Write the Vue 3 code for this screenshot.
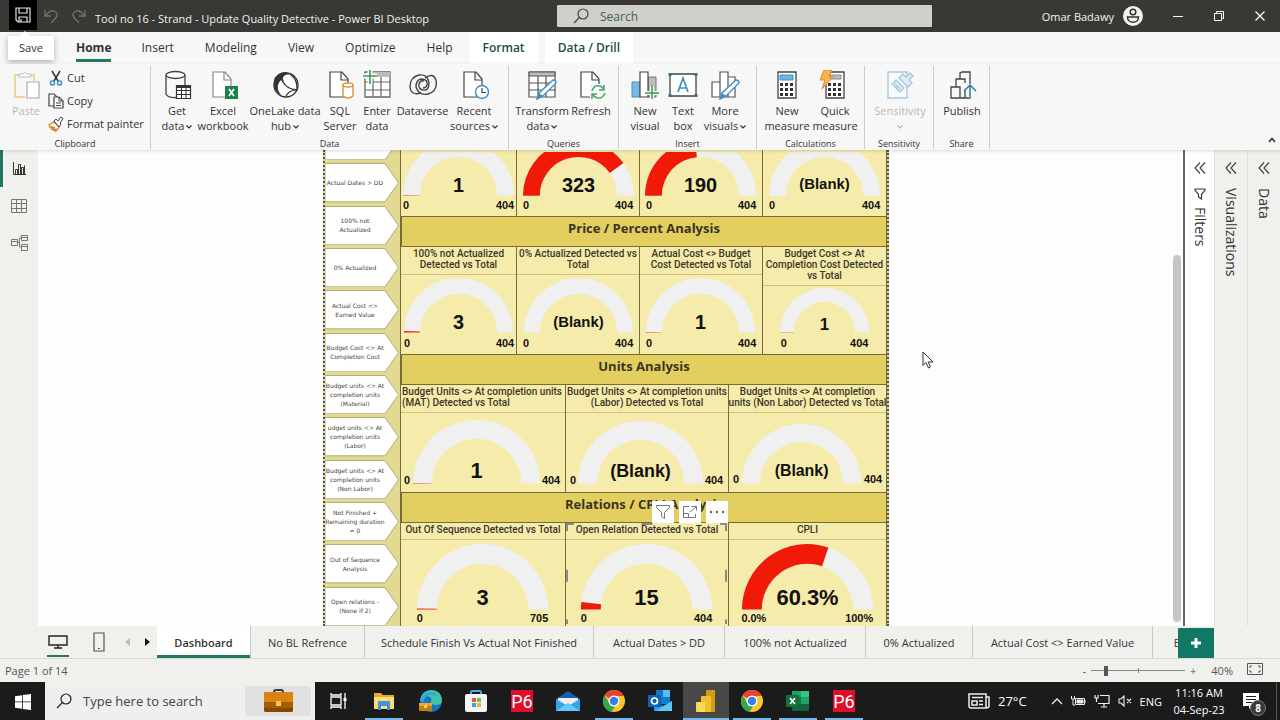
<template>
  <div class="app">
    <header class="titlebar">
      <div class="quick">
        <button class="save" aria-label="Save">
          <svg width="16" height="16" viewBox="0 0 16 16" fill="none" stroke="#e6e6e6" stroke-width="1.2"><path d="M1 1h14v14H3l-2-2zM4 1v5h8V1M4 15v-5h8v5M6 15v-3" /></svg>
        </button>
        <button aria-label="Undo">
          <svg width="14" height="15" viewBox="0 0 14 15" fill="none" stroke="#73736f" stroke-width="1.3"><path d="M1 1v6h6M1 7l4-4c4-3 8 0 8 3 0 2-1 3-6 8" /></svg>
        </button>
        <button aria-label="Redo">
          <svg width="14" height="15" viewBox="0 0 14 15" fill="none" stroke="#73736f" stroke-width="1.3"><path d="M13 1v6H7M13 7L9 3C5 0 1 3 1 6c0 2 1 3 6 8" /></svg>
        </button>
      </div>
      <h1>Tool no 16 - Strand - Update Quality Detective - Power BI Desktop</h1>
      <label class="find">
        <svg width="16" height="16" viewBox="0 0 16 16" fill="none" stroke="#444" stroke-width="1.2"><circle cx="10" cy="6" r="5" /><path d="M6.400 9.500L1 15" /></svg>
        <input type="text" placeholder="Search" aria-label="Search">
      </label>
      <div class="account">
        <span>Omar Badawy</span>
        <svg width="20" height="20" viewBox="0 0 20 20"><circle cx="10" cy="10" r="10" fill="#f2f2f0" /><g fill="none" stroke="#30302e" stroke-width="1.500"><circle cx="10" cy="6" r="2.800" /><path d="M4.500 11h11c0 7-11 7-11 0z" /></g></svg>
      </div>
      <div class="window-buttons">
        <button aria-label="Minimize"><svg width="10" height="10" viewBox="0 0 10 10" stroke="#fff"><path d="M0 5.500h10" /></svg></button>
        <button aria-label="Restore"><svg width="10" height="10" viewBox="0 0 10 10" fill="none" stroke="#fff"><path d="M.5 2.500h7v7h-7zM2.500 2.500v-2h7v7h-2" /></svg></button>
        <button aria-label="Close"><svg width="10" height="10" viewBox="0 0 10 10" stroke="#fff" stroke-width="1.200"><path d="M.5.5l9 9M9.500.5l-9 9" /></svg></button>
      </div>
    </header>

    <nav class="menu">
      <button v-for="m in menu" :key="m.name" :class="m.kind">{{ m.name }}</button>
      <div class="tooltip">Save</div>
    </nav>

    <section class="ribbon">
      <div class="group clipboard">
        <div class="tools">
          <button class="tool off">
            <svg class="icon" viewBox="0 0 30 30" v-html="icons.paste"></svg>
            <span>Paste</span>
          </button>
          <div class="stack">
            <button v-for="c in clip" :key="c.name">
              <svg width="16" height="16" viewBox="0 0 16 16" v-html="icons[c.icon]"></svg>{{ c.name }}
            </button>
          </div>
        </div>
        <div class="caption">Clipboard</div>
      </div>
      <div v-for="g in groups" :key="g.name" class="group" :style="{ width: g.w + 'px' }">
        <div class="tools">
          <button v-for="t in g.tools" :key="t.a + t.icon" class="tool" :class="{ off: t.off }" :style="{ width: t.w + 'px' }">
            <svg class="icon" viewBox="0 0 30 30" v-html="icons[t.icon]"></svg>
            <span>{{ t.a }}</span>
            <span>{{ t.b }}<svg v-if="t.drop" class="drop" width="6" height="4" viewBox="0 0 6 4" fill="none" stroke="currentColor" stroke-width="1.200"><path d="M.5.5L3 3 5.500.5" /></svg></span>
          </button>
        </div>
        <div class="caption">{{ g.name }}</div>
      </div>
      <button class="collapse" aria-label="Collapse ribbon"><svg width="8" height="6" viewBox="0 0 8 6" fill="none" stroke="#333" stroke-width="1.600"><path d="M1 5l3-3.500L7 5" /></svg></button>
    </section>

    <main class="work">
      <aside class="views">
        <button class="on" aria-label="Report view"><svg width="14" height="14" viewBox="0 0 14 14" fill="none" stroke="#333"><path d="M1.500 0v12.500H14M3.500 12V7.500h2V12M6.500 12V2.500h2V12M9.500 12V5.500h2V12M12.500 12V3.500" /></svg></button>
        <button aria-label="Table view"><svg width="16" height="14" viewBox="0 0 16 14" fill="none" stroke="#777"><path d="M.5.5h15v13H.5zM.5 4.500h15M.5 9.500h15M5.500.5v13M10.500.5v13" /></svg></button>
        <button aria-label="Model view"><svg width="17" height="16" viewBox="0 0 17 16" fill="none" stroke="#777"><path d="M.5 4.500h6v6h-6zM.5 6.500h6M10.500.5h6v5h-6zM10.500 2.500h6M10.500 9.500h6v6h-6zM10.500 11.500h6M6.500 7.500h2V3h2M8.500 7.500V12h2" /></svg></button>
      </aside>

      <div class="canvas">
        <div class="report">
          <nav class="pages">
            <a v-for="(p, i) in links" :key="i" href="#">
              <svg viewBox="0 0 74 39" preserveAspectRatio="none"><path d="M0 .5h60L73.500 19.500 60 38.500H0z" fill="#fff" stroke="#a39b62" stroke-width=".8" /></svg>
              <span>{{ p }}</span>
            </a>
          </nav>
          <div class="board">
            <template v-for="(r, i) in rows" :key="i">
              <h2 v-if="r.head">{{ r.head }}</h2>
              <div class="cards" :class="r.kind">
                <article v-for="(c, j) in r.cards" :key="j" :class="{ picked: c.picked }">
                  <h3 v-if="c.title" :class="{ left: c.left }"><span v-for="t in c.title" :key="t">{{ t }}</span></h3>
                  <svg class="gauge" :viewBox="`0 0 ${c.w} ${c.h}`">
                    <path :d="arc(c, 0, 1)" fill="#f0f0f0" />
                    <path v-if="c.part" :d="arc(c, 0, c.part)" fill="#f11a08" />
                    <text :x="c.x" :y="c.y - c.up" :font-size="c.size">{{ c.val }}</text>
                    <text :x="c.lx" :y="c.ly" font-size="11">{{ c.min || '0' }}</text>
                    <text :x="c.rx" :y="c.ly" font-size="11">{{ c.max || '404' }}</text>
                  </svg>
                  <template v-if="c.picked">
                    <svg class="handles" viewBox="0 0 163 102" fill="none" stroke="#8b8b86" stroke-width="2"><path d="M1 8V1h7M76 1h11M155 1h6v7M1 47v12M161 47v12M1 97v5M161 97v5" /></svg>
                    <div class="visual-tools">
                      <button aria-label="Filters"><svg width="16" height="16" viewBox="0 0 16 16" fill="none" stroke="#777"><path d="M1.500 1.500h13v2l-5 5v6l-3-2v-4l-5-5z" /></svg></button>
                      <button aria-label="Focus mode"><svg width="16" height="14" viewBox="0 0 16 14" fill="none" stroke="#777"><path d="M7 1.500H1.500v11h12V9M9.500 1.500h5v4M14.500 1.500L8 7M1.500 8.500h5v4" /></svg></button>
                      <button aria-label="More options"><svg width="16" height="4" viewBox="0 0 16 4" fill="#666"><circle cx="2" cy="2" r="1.200" /><circle cx="8" cy="2" r="1.200" /><circle cx="14" cy="2" r="1.200" /></svg></button>
                    </div>
                  </template>
                </article>
              </div>
            </template>
          </div>
        </div>
        <div class="scroll"></div>
        <svg class="pointer" width="12" height="18" viewBox="0 0 12 18"><path d="M1 1v13.500l3-3 2.500 5.500 2-1-2.300-5H11z" fill="#fff" stroke="#333" /></svg>
      </div>

      <aside v-for="p in panes" :key="p" class="pane" :class="p.toLowerCase()">
        <button :aria-label="'Expand ' + p"><svg width="12" height="12" viewBox="0 0 12 12" fill="none" stroke="#444" stroke-width="1.200"><path d="M6 .5L1 6l5 5.500M11 .5L6 6l5 5.500" /></svg></button>
        <svg v-if="p === 'Filters'" width="12" height="12" viewBox="0 0 12 12" fill="none" stroke="#333" stroke-width="1.200"><path d="M1 1h10v1L7.500 6.500V11l-3-2V6.500L1 2z" /></svg>
        <span>{{ p }}</span>
      </aside>
    </main>

    <footer class="sheets">
      <div class="modes">
        <button class="on" aria-label="Desktop layout"><svg width="20" height="14" viewBox="0 0 20 14" fill="none" stroke="#222" stroke-width="1.400"><path d="M1 1h18v9H1zM10 10v3M6 13h8" /></svg></button>
        <button aria-label="Mobile layout"><svg width="12" height="20" viewBox="0 0 12 20" fill="none" stroke="#555" stroke-width="1.200"><path d="M1 1h10v18H1zM5 16.500h2" /></svg></button>
        <button class="step" aria-label="Previous page"><svg width="5" height="8" viewBox="0 0 5 8" fill="#bbb"><path d="M5 0v8L0 4z" /></svg></button>
        <button class="step" aria-label="Next page"><svg width="5" height="8" viewBox="0 0 5 8" fill="#111"><path d="M0 0v8l5-4z" /></svg></button>
      </div>
      <div class="tabs">
        <button v-for="(s, i) in sheets" :key="s.name" :class="{ on: i === 0 }" :style="{ width: s.w + 'px' }">{{ s.name }}</button>
      </div>
      <button class="add" aria-label="New page"><svg width="12" height="12" viewBox="0 0 12 12" stroke="#fff" stroke-width="3"><path d="M6 1v10M1 6h10" /></svg></button>
    </footer>

    <div class="status">
      <span>Page 1 of 14</span>
      <div class="zoom">
        <button aria-label="Zoom out">-</button>
        <input v-model="zoom" type="range" min="10" max="122" aria-label="Zoom">
        <button aria-label="Zoom in">+</button>
        <span class="pct">40%</span>
        <button aria-label="Fit to page"><svg width="16" height="12" viewBox="0 0 16 12" fill="none" stroke="#555"><path d="M.5.5h15v11H.5zM3 5V3h2M11 3h2v2M13 7v2h-2M5 9H3V7" /></svg></button>
      </div>
    </div>

    <div class="taskbar">
      <button class="start" aria-label="Start"><svg width="16" height="16" viewBox="0 0 16 16" fill="#fff"><path d="M0 2.200L7 1.200v6.300H0zM7.800 1.100L16 0v7.500H7.800zM0 8.300h7v6.500l-7-1zM7.800 8.300H16V16l-8.200-1.100z" /></svg></button>
      <label class="seek">
        <svg width="16" height="16" viewBox="0 0 16 16" fill="none" stroke="#222" stroke-width="1.200"><circle cx="10" cy="6" r="5" /><path d="M6.400 9.500L1 15" /></svg>
        <input type="text" placeholder="Type here to search" aria-label="Type here to search">
        <span class="case"><svg width="29" height="24" viewBox="0 0 29 24"><path d="M10 4V3q0-2 2-2h5q2 0 2 2v1" fill="none" stroke="#3b3b3b" stroke-width="2" /><rect y="3" width="29" height="20" rx="2" fill="#a65c05" /><path d="M0 13V5q0-2 2-2h25q2 0 2 2v8z" fill="#d98310" /><path d="M0 19h29v2q0 2-2 2H2q-2 0-2-2z" fill="#844606" /><rect x="12" y="12" width="5" height="5" fill="#ffcc3e" /></svg></span>
      </label>
      <button v-for="(a, i) in apps" :key="i" class="app-button" :class="{ open: a.open, front: a.front }" :aria-label="a.name">
        <svg width="24" height="24" viewBox="0 0 24 24" v-html="icons[a.icon]"></svg>
        <span v-if="a.icon === 'p6'" class="p6">P6</span>
      </button>
      <div class="tray">
        <svg class="news" width="22" height="16" viewBox="0 0 22 16" fill="none" stroke="#eee" stroke-width="1.500"><path d="M1 1h17v14H3q-2 0-2-2zM18 4h3v9q0 2-3 2M4 4.500h11M4 8h5v4H4zM11 8h4M11 11.500h4" /></svg>
        <span class="temp">27°C</span>
        <svg class="up" width="12" height="7" viewBox="0 0 12 7" fill="none" stroke="#eee" stroke-width="1.300"><path d="M1 6l5-5 5 5" /></svg>
        <svg width="15" height="12" viewBox="0 0 15 12" fill="none" stroke="#eee"><path d="M4.500 3.500h9v6h-9zM14 5v3" /><path d="M6 5h6v3H6z" fill="#eee" /><path d="M.5 1v3h3V1M2 4v6h2" /></svg>
        <svg width="16" height="14" viewBox="0 0 16 14" fill="none" stroke="#eee" stroke-width="1.200"><path d="M6 1.500h9v8H4M10 10v3M7 13h6M1 1v3h3V1M2.500 4v4" /></svg>
        <svg width="14" height="12" viewBox="0 0 14 12" fill="none" stroke="#eee" stroke-width="1.100"><path d="M1 4h2l3-3v10L3 8H1zM9 4l4 4M13 4L9 8" /></svg>
        <span class="lang">ENG</span>
        <div class="clock"><span>11:16 AM</span><span>04-Sep-23</span></div>
        <div class="notice">
          <svg width="16" height="16" viewBox="0 0 16 16" fill="#fff"><path d="M0 0h16v13H9l-3 3v-3H0z" /><path d="M3 3.500h10M3 6.500h10M3 9.500h6" stroke="#1b1b1b" /></svg>
          <b>8</b>
        </div>
      </div>
    </div>
  </div>
</template>

<script setup>
import { ref } from 'vue'

const zoom = ref(26)
const panes = ['Filters', 'Visualizations', 'Data']

const menu = [
  { name: 'Home', kind: 'on' },
  { name: 'Insert' },
  { name: 'Modeling' },
  { name: 'View' },
  { name: 'Optimize' },
  { name: 'Help' },
  { name: 'Format', kind: 'extra' },
  { name: 'Data / Drill', kind: 'extra' }
]

const clip = [
  { name: 'Cut', icon: 'cut' },
  { name: 'Copy', icon: 'copy' },
  { name: 'Format painter', icon: 'brush' }
]

const groups = [
  { name: 'Data', w: 358, tools: [
    { a: 'Get', b: 'data', drop: true, icon: 'getdata', w: 42 },
    { a: 'Excel', b: 'workbook', icon: 'excelbook', w: 50 },
    { a: 'OneLake data', b: 'hub', drop: true, icon: 'onelake', w: 74 },
    { a: 'SQL', b: 'Server', icon: 'sql', w: 36 },
    { a: 'Enter', b: 'data', icon: 'enter', w: 38 },
    { a: 'Dataverse', b: '', icon: 'dataverse', w: 53 },
    { a: 'Recent', b: 'sources', drop: true, icon: 'recent', w: 50 }
  ] },
  { name: 'Queries', w: 110, tools: [
    { a: 'Transform', b: 'data', drop: true, icon: 'transform', w: 56 },
    { a: 'Refresh', b: '', icon: 'refresh', w: 42 }
  ] },
  { name: 'Insert', w: 138, tools: [
    { a: 'New', b: 'visual', icon: 'visual', w: 42 },
    { a: 'Text', b: 'box', icon: 'textbox', w: 34 },
    { a: 'More', b: 'visuals', drop: true, icon: 'more', w: 50 }
  ] },
  { name: 'Calculations', w: 108, tools: [
    { a: 'New', b: 'measure', icon: 'measure', w: 50 },
    { a: 'Quick', b: 'measure', icon: 'quick', w: 46 }
  ] },
  { name: 'Sensitivity', w: 69, tools: [{ a: 'Sensitivity', b: '', drop: true, off: true, icon: 'label', w: 60 }] },
  { name: 'Share', w: 56, tools: [{ a: 'Publish', b: '', icon: 'publish', w: 46 }] }
]

const links = [
  '', 'Actual Dates > DD', '100% not Actualized', '0% Actualized', 'Actual Cost <> Earned Value',
  'Budget Cost <> At Completion Cost', 'Budget units <> At completion units (Material)',
  'udget units <> At completion units (Labor)', 'Budget units <> At completion units (Non Labor)',
  'Not Finished + Remaining duration = 0', 'Out of Sequence Analysis', 'Open relations - (None if 2)'
]

const rows = [
  { kind: 'four top', cards: [
    { w: 116, h: 65, x: 58, y: 44, r: 56, k: 39, part: 0.003, val: '1', size: 20, up: 4, lx: 5, rx: 105, ly: 57 },
    { w: 123, h: 65, x: 62, y: 44, r: 56, k: 39, part: 0.8, val: '323', size: 20, up: 4, lx: 9, rx: 108, ly: 57 },
    { w: 123, h: 65, x: 61, y: 44, r: 56, k: 39, part: 0.47, val: '190', size: 20, up: 4, lx: 9, rx: 108, ly: 57 },
    { w: 124, h: 65, x: 62, y: 44, r: 56, k: 39, val: '(Blank)', size: 15, up: 7, lx: 9, rx: 109, ly: 57 }
  ] },
  { kind: 'four', head: 'Price / Percent Analysis', cards: [
    { title: ['100% not Actualized', 'Detected vs Total'], w: 116, h: 78, x: 58, y: 58, r: 55, k: 39, part: 0.008, val: '3', size: 20, up: 4, lx: 6, rx: 105, ly: 73 },
    { title: ['0% Actualized Detected vs', 'Total'], w: 123, h: 78, x: 62, y: 58, r: 55, k: 39, val: '(Blank)', size: 15, up: 6, lx: 9, rx: 108, ly: 73 },
    { title: ['Actual Cost <> Budget', 'Cost Detected vs Total'], w: 123, h: 78, x: 61, y: 58, r: 55, k: 39, part: 0.003, val: '1', size: 20, up: 4, lx: 9, rx: 108, ly: 73 },
    { title: ['Budget Cost <> At', 'Completion Cost Detected', 'vs Total'], w: 124, h: 67, x: 62, y: 47, r: 45, k: 31, part: 0.003, val: '1', size: 17, up: 3, lx: 21, rx: 97, ly: 62 }
  ] },
  { kind: 'three', head: 'Units Analysis', cards: [
    { title: ['Budget Units <> At completion units', '(MAT) Detected vs Total'], left: true, w: 165, h: 79, x: 76, y: 71, r: 64, k: 45, part: 0.003, val: '1', size: 22, up: 6, lx: 6, rx: 151, ly: 71 },
    { title: ['Budget Units <> At completion units', '(Labor) Detected vs Total'], w: 163, h: 79, x: 75, y: 71, r: 63, k: 44, val: '(Blank)', size: 18, up: 7, lx: 7, rx: 149, ly: 71 },
    { title: ['Budget Units <> At completion', 'units (Non Labor) Detected vs Total'], w: 158, h: 79, x: 73, y: 71, r: 60, k: 42, val: '(Blank)', size: 16, up: 8, lx: 7, rx: 145, ly: 70 }
  ] },
  { kind: 'three', head: 'Relations / CPLI Analysis', cards: [
    { title: ['Out Of Sequence Detected vs Total'], w: 165, h: 86, x: 82, y: 70, r: 66, k: 46, part: 0.005, val: '3', size: 22, up: 5, lx: 19, rx: 139, ly: 83, max: '705' },
    { title: ['Open Relation Detected vs Total'], picked: true, w: 163, h: 86, x: 81, y: 70, r: 66, k: 46, part: 0.037, val: '15', size: 22, up: 5, lx: 18, rx: 138, ly: 83 },
    { title: ['CPLI'], w: 158, h: 86, x: 79, y: 70, r: 66, k: 46, part: 0.603, val: '60.3%', size: 22, up: 5, lx: 25, rx: 131, ly: 83, min: '0.0%', max: '100%' }
  ] }
]

function arc(c, from, to) {
  const pt = (rad, t) => {
    const a = Math.PI * (1 - t)
    return (c.x + rad * Math.cos(a)).toFixed(2) + ' ' + (c.y - rad * Math.sin(a)).toFixed(2)
  }
  return `M${pt(c.r, from)}A${c.r} ${c.r} 0 0 1 ${pt(c.r, to)}L${pt(c.k, to)}A${c.k} ${c.k} 0 0 0 ${pt(c.k, from)}z`
}

const sheets = [
  { name: 'Dashboard', w: 94 },
  { name: 'No BL Refrence', w: 114 },
  { name: 'Schedule Finish Vs Actual Not Finished', w: 229 },
  { name: 'Actual Dates > DD', w: 131 },
  { name: '100% not Actualized', w: 141 },
  { name: '0% Actualized', w: 107 },
  { name: 'Actual Cost <> Earned Value', w: 180 },
  { name: 'Budget Cost <> At Completion Cost', w: 222 }
]

const apps = [
  { name: 'Task view', icon: 'taskview' },
  { name: 'File Explorer', icon: 'folder', open: true },
  { name: 'Edge', icon: 'edge' },
  { name: 'Store', icon: 'store' },
  { name: 'Primavera', icon: 'p6' },
  { name: 'Mail', icon: 'mail' },
  { name: 'Chrome', icon: 'chrome', open: true },
  { name: 'Outlook', icon: 'outlook' },
  { name: 'Power BI', icon: 'powerbi', front: true, open: true },
  { name: 'Chrome', icon: 'chrome', open: true },
  { name: 'Excel', icon: 'excel', open: true },
  { name: 'Primavera', icon: 'p6', open: true }
]

const sheet = '<path d="M5 2h12l6 7v18H5z" fill="#fff" stroke="#444" stroke-width="1.200"/><path d="M16 2v8h7" fill="none" stroke="#444" stroke-width="1.200"/>'
const pencil = '<path d="M26 10q3 0 3 3L16 26l-6 3 2-6z" fill="#fff" stroke="#3f8fc4" stroke-width="1.400"/><path d="M12 23l4 3-6 3z" fill="#3f8fc4"/>'
const dots = '<path d="M8 13h3v3H8zM13 13h3v3h-3zM18 13h3v3h-3zM8 18h3v3H8zM13 18h3v3h-3zM18 18h3v3h-3zM8 23h3v3H8zM13 23h3v3h-3zM18 23h3v3h-3z" fill="#333"/>'

const icons = {
  paste: '<path d="M9 5H4v22h10M19 5h4v6" fill="none" stroke="#efd3a0" stroke-width="2"/><path d="M8 7V4h4q1-3 4 0h4v3z" fill="#fff" stroke="#bbb"/><path d="M16 12h12v16H16z" fill="#fff" stroke="#aaa" stroke-width="1.200"/>',
  cut: '<path d="M4 1l6 10M12 1L6 11" fill="none" stroke="#333" stroke-width="1.500"/><circle cx="4.500" cy="13" r="2" fill="none" stroke="#3f8fc4" stroke-width="1.500"/><circle cx="11.500" cy="13" r="2" fill="none" stroke="#3f8fc4" stroke-width="1.500"/>',
  copy: '<path d="M6 13H1V1h5l3 3" fill="none" stroke="#444" stroke-width="1.200"/><path d="M6 4h5l4 4v7H6z" fill="#fff" stroke="#444" stroke-width="1.200"/><path d="M11 4v4h4M8 10h5M8 12.500h5" fill="none" stroke="#444"/>',
  brush: '<path d="M1 9l5-3 5 5-3 4q-5-1-7-6z" fill="#fff" stroke="#d8822c" stroke-width="1.400"/><path d="M3 11l4 1M5 13l3 1" stroke="#d8822c" stroke-width="2"/><path d="M6 5l2-2 2 2 3-4 2 1.500L12 7l1 1-2 3z" fill="#fff" stroke="#444"/>',
  getdata: '<path d="M4 5v19q2 4 10 3.500M23 5v10" fill="none" stroke="#444" stroke-width="1.300"/><ellipse cx="13.500" cy="5" rx="9.500" ry="3.500" fill="#fff" stroke="#444" stroke-width="1.300"/><path d="M14.500 15.500h14v13h-14z" fill="#fff" stroke="#333" stroke-width="1.200"/><path d="M14 17h15" stroke="#333" stroke-width="2"/><path d="M14 20.500h15M14 24.500h15M19.500 17v11M24 17v11" stroke="#333"/>',
  excelbook: sheet.replace(/#444/g, '#888') + '<path d="M17 16h13v13H17z" fill="#17834a"/><path d="M21 19l5 7M26 19l-5 7" stroke="#fff" stroke-width="1.700"/>',
  onelake: '<circle cx="16" cy="15" r="12" fill="#fff" stroke="#333" stroke-width="1.300"/><path d="M16 2Q7 2 4 10q-2 10 8 16-8-9-1-16 4 8 16 10 2-12-11-18z" fill="#333"/><path d="M12 8q2 11 15 12 1-10-7-16-6-1-8 4z" fill="#fff" stroke="#333" stroke-width="1.200"/><path d="M27 20q-8 0-11 6" fill="none" stroke="#333" stroke-width="1.200"/>',
  sql: sheet + '<path d="M18 15v11q5 4 10 0V15" fill="#fff" stroke="#e0913c" stroke-width="1.400"/><ellipse cx="23" cy="15" rx="5" ry="2" fill="#fff" stroke="#e0913c" stroke-width="1.400"/>',
  enter: '<path d="M3 2h25v25H3z" fill="#fff" stroke="#666" stroke-width="1.300"/><path d="M10 2h18v5H10z" fill="#bbb"/><path d="M3 12h25M3 20h25M11 7v20M19 7v20" stroke="#666" stroke-width="1.200"/><path d="M8 0v14M0 6h15" stroke="#f7f7f7" stroke-width="5"/><path d="M8 0v14M1 6h14" stroke="#3b9b5b" stroke-width="1.600"/>',
  dataverse: '<g fill="none" stroke="#444" stroke-width="1.400"><path d="M13 23q-10 3-11-6Q2 7 11 5q9-1 10 8 0 8-6 7-5-1-4-6 1-4 5-3"/><path d="M17 8q8-6 11 2 2 11-8 14-9 2-12-7 0-7 5-8 7 0 6 6-1 3-4 3"/></g>',
  recent: sheet + '<circle cx="23" cy="22" r="6.500" fill="#fff" stroke="#3f8fc4" stroke-width="1.400"/><path d="M23 18v4.500h4" fill="none" stroke="#444" stroke-width="1.200"/>',
  transform: '<path d="M2 2h26v25H2z" fill="#fff" stroke="#555" stroke-width="1.200"/><path d="M2 2h26v4H2z" fill="#bbb" stroke="#555"/><path d="M2 13h26M2 20h26M11 6v21M19 6v21" stroke="#555" stroke-width="1.200"/>' + pencil,
  refresh: sheet + '<path d="M14 14h16v16H14z" fill="#f7f7f7"/><path d="M16 21q2-6 7-5 3 0 5 4M28 15v5h-5M29 23q-2 5-6 5-4 0-7-4M16 29v-5h5" fill="none" stroke="#4aa565" stroke-width="1.500"/>',
  visual: '<path d="M2 12h8v15H2z" fill="#7ab8e4" stroke="#3f8fc4"/><path d="M18 7h8v20h-8z" fill="#bbb" stroke="#777"/><path d="M10 2h8v25h-8z" fill="#fff" stroke="#444" stroke-width="1.200"/><path d="M22 16v13M15 23h14" stroke="#f7f7f7" stroke-width="4"/><path d="M22 15v14M15 23h14" stroke="#3b9b5b" stroke-width="1.500"/>',
  textbox: '<path d="M2 4h26v22H2z" fill="#fff" stroke="#444" stroke-width="1.300"/><path d="M10 22l5-14 5 14M12 18h7" fill="none" stroke="#3f8fc4" stroke-width="1.700"/><path d="M.5 3h3v3h-3zM26.500 3h3v3h-3zM.5 24h3v3h-3zM26.500 24h3v3h-3z" fill="#32708f"/>',
  more: '<path d="M2 12h8v15H2zM10 2h8v25h-8zM18 7h7v20h-7z" fill="#fff" stroke="#555" stroke-width="1.200"/>' + pencil,
  measure: '<path d="M6 2h18v26H6z" fill="#fff" stroke="#444" stroke-width="1.300"/><path d="M8 5h13v5H8z" fill="#6db4e3" stroke="#3f8fc4"/>' + dots,
  quick: '<path d="M6 2h18v26H6z" fill="#fff" stroke="#444" stroke-width="1.300"/><path d="M10 5h11v4H10z" fill="#bbb" stroke="#888"/>' + dots + '<path d="M4 0h8L9 7h4L2 19l3-9H0z" fill="#f5b34f" stroke="#dc8b2e"/>',
  label: '<path d="M3 2h19v26H3z" fill="#f7fbfd" stroke="#a8c9dc" stroke-width="1.400"/><path d="M7 14l4-4 8 8-4 4zM10 14l5 5M14 8l4-4 3 3 4-4 3 3-4 4 3 3-4 4z" fill="#dcecf5" stroke="#a8c9dc" stroke-width="1.400"/>',
  publish: '<path d="M4 28V17h9v11zM9 17V9h9v4M13 9V3l2-1h8v12M13 28h9M18 20v8" fill="none" stroke="#444" stroke-width="1.300"/><path d="M23 29V16M17 21l6-6 6 6" fill="none" stroke="#2f7e9e" stroke-width="1.500"/>',
  taskview: '<path d="M5 8h10v8H5zM5 4v2h10V4M5 20v-2h10v2M19 4v16" fill="none" stroke="#fff" stroke-width="1.300"/><path d="M17.500 9h3v3h-3z" fill="#fff"/>',
  folder: '<path d="M2 4h7l2 2h11v14H2z" fill="#e8a931"/><path d="M2 8h20v12H2z" fill="#fddc78"/><path d="M6 12h12v9h-3v-4H9v4H6z" fill="#3f95d3"/>',
  edge: '<circle cx="13" cy="12" r="11" fill="#1674c4"/><path d="M2 11Q4 1 14 1q9 1 10 9 0 6-6 6-5 0-5-3 2-6-5-6-4 0-6 4z" fill="#43c5a1"/><path d="M2 11Q5 3 14 3q6 1 6 6-2-3-7-3-6 0-8 8z" fill="#30a7de"/><path d="M1 14h13v8H1z" fill="#c47c14"/><path d="M1 14h13v3H1z" fill="#efa52b"/><path d="M6 16h3v3H6z" fill="#ffd767"/>',
  store: '<path d="M7 6V3q0-1 2-1h6q2 0 2 1v3" fill="none" stroke="#4fb2e6" stroke-width="1.800"/><rect x="1" y="5" width="22" height="18" rx="2" fill="#f5f5f5"/><path d="M8 9h4v4H8z" fill="#e1583b"/><path d="M13 9h4v4h-4z" fill="#7db843"/><path d="M8 14h4v4H8z" fill="#3b9de0"/><path d="M13 14h4v4h-4z" fill="#f0b432"/>',
  p6: '<path d="M1 1h22v22H1z" fill="#e00d2b"/>',
  mail: '<path d="M0 10l12-8 12 8v12H0z" fill="#135ea8"/><path d="M2 9h20v7H2z" fill="#eee"/><path d="M0 10l12 7 12-7v12H0z" fill="#30a5e8"/><path d="M0 22l12-8 12 8z" fill="#63c9f5"/>',
  chrome: '<circle cx="12" cy="12" r="11" fill="#fbc52c"/><path d="M12 12L2.500 6.500Q6 1 12 1q7 0 10 6H12z" fill="#e64335"/><path d="M2.500 6.500L8 15l5 2-3.500 6Q1 21 1 12q0-3 1.500-5.500z" fill="#34a551"/><circle cx="12" cy="12" r="5.500" fill="#fff"/><circle cx="12" cy="12" r="4.200" fill="#3b7ded"/>',
  outlook: '<path d="M8 1h14v14H8z" fill="#1578cd"/><path d="M15 1h7v7h-7z" fill="#4fc1f2"/><path d="M6 12l9 5 9-5v10H6z" fill="#2a9be4"/><path d="M24 12v10H8z" fill="#5bc5f3"/><path d="M0 6h13v12H0z" fill="#0c62b4"/><circle cx="6.500" cy="12" r="3" fill="none" stroke="#fff" stroke-width="1.700"/>',
  powerbi: '<rect x="12" y="1" width="9" height="22" rx="1" fill="#d99a12"/><rect x="7" y="7" width="10" height="16" rx="1" fill="#f0bf2c"/><rect x="2" y="13" width="9" height="10" rx="1" fill="#f8d95c"/>',
  excel: '<path d="M6 2h17v20H6z" fill="#21a366"/><path d="M15 2h8v6h-8z" fill="#38c481"/><path d="M6 8h9v7H6z" fill="#107c41"/><path d="M6 15h17v7H6z" fill="#17613b"/><path d="M0 6h13v12H0z" fill="#0f7039"/><path d="M4 9l5 6M9 9l-5 6" stroke="#fff" stroke-width="1.700"/>'
}
</script>

<style>
body {
  margin: 0;
}
</style>

<style scoped>
.app {
  height: 100vh;
  display: flex;
  flex-direction: column;
  overflow: hidden;
  font-family: "Open Sans", "Noto Sans", sans-serif;
  font-size: 11px;
  color: #333;
  background: #f0f0ec;
}

button {
  border: 0;
  padding: 0;
  background: none;
  font: inherit;
  color: inherit;
  white-space: nowrap;
}

input {
  border: 0;
  padding: 0;
  min-width: 0;
  background: none;
  font: inherit;
}

svg {
  flex: none;
}

/* title bar */
.titlebar {
  height: 32px;
  flex: none;
  display: flex;
  align-items: center;
  position: relative;
  background: #383834;
  color: #f2f2f2;
}

.quick {
  display: flex;
  align-self: stretch;
  align-items: center;
  padding-left: 9px;
}

.quick button {
  width: 28px;
  height: 30px;
  display: grid;
  place-items: center;
}

.quick .save {
  background: #000;
  align-self: flex-start;
}

h1 {
  margin: 5px 0 0 2px;
  font-size: 11px;
  font-weight: 400;
  white-space: nowrap;
  flex: 1;
}

.find {
  position: absolute;
  left: 557px;
  right: 348px;
  top: 5px;
  height: 22px;
  display: flex;
  align-items: center;
  gap: 11px;
  padding-left: 16px;
  box-sizing: border-box;
  background: #cfd0ca;
  border-radius: 1px;
}

.find input {
  flex: 1;
  font-size: 12px;
}

.find input::placeholder {
  color: #3d6159;
}

.account {
  display: flex;
  align-items: center;
  gap: 9px;
}

.window-buttons {
  display: flex;
  padding-left: 14px;
}

.window-buttons button {
  width: 41px;
  height: 32px;
}

/* menu */
.menu {
  height: 32px;
  flex: none;
  display: flex;
  align-items: center;
  gap: 29px;
  padding-left: 76px;
  position: relative;
  background: #f7f7f7;
}

.menu button {
  height: 30px;
  padding-bottom: 2px;
  font-size: 12px;
}

.menu .on {
  height: 28px;
  font-weight: 700;
  background: linear-gradient(#217764, #217764) bottom / 100% 3px no-repeat;
}

.menu .extra {
  height: 32px;
  padding: 0 13px 2px;
  margin: 0 -14px 0 -13px;
  background: #fff;
  color: #214f43;
  font-weight: 600;
}

.menu .extra + .extra {
  margin-left: -8px;
}

.menu button:not(.on):not(.extra) {
  padding-left: 1px;
  padding-right: 1px;
}

.tooltip {
  position: absolute;
  left: 8px;
  top: 4px;
  width: 46px;
  height: 24px;
  line-height: 24px;
  text-align: center;
  background: #fff;
  box-shadow: 0 2px 6px rgba(0, 0, 0, 0.3);
}

.tooltip::before {
  content: "";
  position: absolute;
  left: 12px;
  top: -5px;
  border: 5px solid transparent;
  border-top: 0;
  border-bottom-color: #fff;
}

/* ribbon */
.ribbon {
  height: 86px;
  flex: none;
  display: flex;
  position: relative;
  z-index: 1;
  background: #f7f7f7;
  box-shadow: 0 1px 3px rgba(0, 0, 0, 0.15);
}

.group {
  box-sizing: border-box;
  display: flex;
  flex-direction: column;
  justify-content: space-between;
  margin: 2px 0 1px;
  padding-top: 4px;
  border-right: 1px solid #ccc;
}

.clipboard {
  width: 151px;
}

.tools {
  display: flex;
  padding-left: 5px;
}

.tool {
  display: flex;
  flex-direction: column;
  align-items: center;
  line-height: 15px;
}

.tool span {
  min-height: 15px;
}

.icon {
  width: 30px;
  height: 30px;
  margin-bottom: 3px;
}

.drop {
  margin-left: 2px;
  vertical-align: 1px;
}

.off {
  color: #b9b9b9;
}

.off .drop {
  margin-left: 0;
}

.clipboard .tools {
  padding-left: 11px;
  gap: 7px;
}

.stack {
  display: flex;
  flex-direction: column;
  align-items: flex-start;
  gap: 8px;
}

.stack button {
  height: 15px;
  display: flex;
  align-items: center;
  gap: 3px;
}

.caption {
  text-align: center;
  font-size: 9px;
  line-height: 10px;
}

.collapse {
  margin: auto 4px 4px auto;
}

/* work area */
.work {
  flex: 1;
  min-height: 0;
  display: flex;
}

.views {
  width: 38px;
  display: flex;
  flex-direction: column;
}

.views button {
  height: 37px;
  display: grid;
  place-items: center;
}

.views .on {
  padding-right: 3px;
  border-left: 3px solid #217764;
}

.canvas {
  flex: 1;
  min-width: 0;
  position: relative;
  padding-right: 9px;
  background: #fdfdfd;
  display: flex;
  justify-content: center;
  overflow: hidden;
}

.report {
  width: 562px;
  display: flex;
  border: 2px dotted #555;
  border-width: 0 2px;
  background: #e2d992;
}

.pages {
  width: 75px;
  flex: none;
  margin-top: -29px;
  display: flex;
  flex-direction: column;
  gap: 3px;
}

.pages a {
  flex: 1;
  min-height: 0;
  display: grid;
  text-decoration: none;
  color: #444;
  font: 6px/9px "DejaVu Sans", sans-serif;
}

.pages svg {
  grid-area: 1 / 1;
  width: 74px;
  height: 100%;
}

.pages span {
  grid-area: 1 / 1;
  align-self: center;
  width: 60px;
  text-align: center;
}

.board {
  flex: 1;
  min-width: 0;
  border-left: 1px solid #766c35;
}

.board h2 {
  height: 31px;
  box-sizing: border-box;
  margin: 0;
  padding-top: 1px;
  text-align: center;
  font-size: 13px;
  line-height: 20px;
  color: #3b3420;
  background: #e3ce60;
  border: 1px solid #766c35;
}

.cards {
  display: grid;
  height: 107px;
  background: #f5ebab;
}

.four {
  grid-template-columns: 116fr 123fr 123fr 124fr;
}

.three {
  grid-template-columns: 165fr 163fr 158fr;
}

.cards.top {
  height: 66px;
}

article {
  min-width: 0;
  position: relative;
  display: flex;
  flex-direction: column;
  border-right: 1px solid #766c35;
}

.top article {
  justify-content: flex-end;
}

h3 {
  margin: 0;
  padding: 1px 0 4px;
  display: flex;
  flex-direction: column;
  align-items: center;
  font: 500 10px/11px Roboto, sans-serif;
  color: #3b3628;
  white-space: nowrap;
  border-bottom: 1px solid #cbc184;
}

h3.left {
  align-items: flex-start;
  padding-left: 1px;
}

.gauge {
  width: 100%;
  font-family: "Liberation Sans", Arial, sans-serif;
  font-weight: 700;
  text-anchor: middle;
  fill: #111;
}

.handles {
  position: absolute;
  left: 0;
  top: 0;
  width: 100%;
}

.visual-tools {
  position: absolute;
  right: 0;
  top: -22px;
  display: flex;
  gap: 5px;
}

.visual-tools button {
  width: 22px;
  height: 22px;
  display: grid;
  place-items: center;
  background: #fff;
}

.scroll {
  position: absolute;
  right: 2px;
  top: 105px;
  bottom: 4px;
  width: 8px;
  border-radius: 4px;
  background: #c5c5c5;
}

.pointer {
  position: absolute;
  left: 884px;
  top: 201px;
}

.pane {
  width: 32px;
  border-left: 1px solid #e0e0dc;
  display: flex;
  flex-direction: column;
  align-items: center;
  padding-top: 12px;
  font-size: 14px;
}

.pane span {
  writing-mode: vertical-rl;
  line-height: 18px;
}

.pane button {
  height: 12px;
  margin-bottom: 14px;
  display: flex;
}

.pane.filters {
  width: 29px;
  background: #fff;
  border-left: 2px solid #666;
}

.filters span {
  margin-top: 7px;
}

/* page tabs */
.sheets {
  height: 33px;
  flex: none;
  display: flex;
  border-bottom: 1px solid #d8d8d4;
  box-sizing: border-box;
}

.modes {
  width: 157px;
  flex: none;
  box-sizing: border-box;
  display: flex;
  align-items: center;
  gap: 15px;
  padding-left: 47px;
}

.modes button {
  flex: none;
  width: 22px;
  height: 30px;
  display: grid;
  place-items: center;
}

.modes .on {
  margin-right: 4px;
  background: linear-gradient(#217764, #217764) bottom / 100% 2px no-repeat;
}

.modes .step {
  width: 5px;
}

.tabs {
  flex: 1;
  min-width: 0;
  display: flex;
  overflow: hidden;
}

.tabs button {
  flex: none;
  border-right: 1px solid #c8c8c4;
}

.tabs .on {
  background: linear-gradient(#217764, #217764) bottom / 100% 3px no-repeat #fff;
  font-weight: 600;
}

.add {
  width: 36px;
  height: 30px;
  margin: 2px 66px 0 0;
  display: grid;
  place-items: center;
  background: #117865;
}

/* status bar */
.status {
  height: 23px;
  flex: none;
  display: flex;
  align-items: center;
  justify-content: space-between;
  padding: 0 17px 0 5px;
  color: #555;
}

.zoom {
  display: flex;
  align-items: center;
  gap: 5px;
}

.zoom input {
  width: 94px;
  height: 12px;
  margin: 0;
  appearance: none;
  background: linear-gradient(#888, #888) center / 100% 1px no-repeat, linear-gradient(#888, #888) center / 1px 5px no-repeat;
}

.zoom input::-webkit-slider-thumb {
  appearance: none;
  width: 4px;
  height: 10px;
  background: #555;
}

.zoom .pct {
  margin: 0 9px 0 10px;
}

/* taskbar */
.taskbar {
  height: 38px;
  flex: none;
  display: flex;
  background: #1b1b1b;
  color: #fff;
}

.start {
  width: 45px;
  flex: none;
}

.start svg {
  vertical-align: middle;
}

.seek {
  width: 270px;
  flex: none;
  box-sizing: border-box;
  display: flex;
  align-items: center;
  gap: 11px;
  padding: 0 4px 0 11px;
  background: #efefee;
}

.seek input {
  flex: 1;
  font-size: 13px;
}

.seek input::placeholder {
  color: #444;
}

.case {
  width: 66px;
  height: 30px;
  display: grid;
  place-items: center;
  border-radius: 4px;
  background: #e1e1e0;
}

.app-button {
  width: 46px;
  display: grid;
  place-items: center;
}

.app-button > * {
  grid-area: 1 / 1;
}

.app-button.open {
  background: linear-gradient(#76b9ed, #76b9ed) bottom / 38px 2px no-repeat;
}

.app-button.front {
  background: linear-gradient(#76b9ed, #76b9ed) bottom / 100% 2px no-repeat #484848;
}

.p6 {
  font: 18px "Liberation Sans Narrow", Roboto, sans-serif;
}

.tray {
  flex: 1;
  display: flex;
  align-items: center;
  justify-content: flex-end;
  gap: 8px;
  padding-right: 3px;
}

.temp {
  font-size: 13px;
}

.up {
  margin-left: 16px;
}

.clock {
  width: 58px;
  display: flex;
  flex-direction: column;
  align-items: center;
  line-height: 17px;
}

.notice {
  height: 38px;
  width: 33px;
  margin-left: 7px;
  position: relative;
  border-right: 1px solid #555;
}

.notice svg {
  margin-top: 11px;
}

.notice b {
  position: absolute;
  left: 7px;
  top: 18px;
  width: 14px;
  height: 14px;
  border-radius: 50%;
  border: 1px solid #777;
  background: #3a3a3a;
  text-align: center;
  font-size: 10px;
  line-height: 14px;
}
</style>
